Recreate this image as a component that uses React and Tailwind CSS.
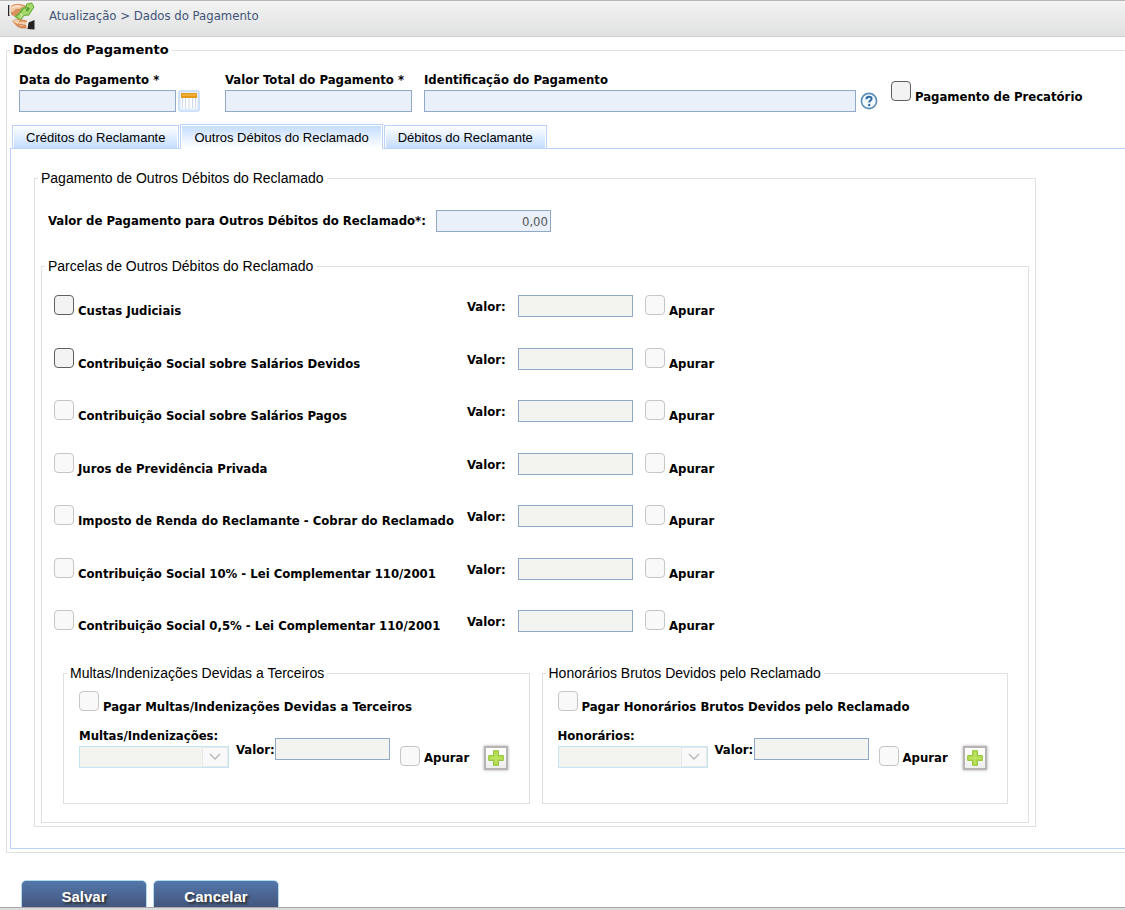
const LABEL = "font-['DejaVu_Sans_Condensed','DejaVu_Sans',sans-serif] text-[13px] leading-4 font-bold text-black";
const FRAME = "min-w-0 border border-[#e0e0e0]";
const LEGEND = "px-[3px] text-[14px] leading-4 text-black font-['Liberation_Sans',sans-serif]";
const FIELD = "h-[22px] border border-[#8fa9c6] px-0.5 text-[13px] text-[#555] font-['DejaVu_Sans_Condensed',sans-serif]";

function Check({ id, text, disabled, compact }) {
  return (
    <label htmlFor={id} className={`flex gap-1 ${compact ? "h-5" : "h-6"}`}>
      <input
        id={id}
        type="checkbox"
        disabled={disabled}
        className="size-5 shrink-0 appearance-none rounded-[4px] border border-[#5f5f5f] bg-[#f3f3f3] checked:bg-[#3b6ea5] disabled:border-[#c6c6c6] disabled:bg-[#f9f9f9]"
      />
      <span className={`self-end whitespace-nowrap ${LABEL}`}>{text}</span>
    </label>
  );
}

function MoneyIcon() {
  return (
    <svg viewBox="0 0 28 28" className="size-7" aria-hidden="true">
      <path d="M0 3h1.500v11H0z" fill="#2a2525" />
      <path d="M1.500 3.500h1.300v9.500H1.500z" fill="#f4f4f4" />
      <path d="M2.800 4c3-2 6-2.500 9-2 4 .6 6 1.600 7 3l-2 3-4 .3-1.500 3.700-4 2c-2 .2-3.500-.8-4.500-2z" fill="#d8905f" />
      <path d="M3 4.500c4-2.500 9-2.300 13 0l-2 2-6 .5-3 3H3z" fill="#f3c7a1" />
      <path d="M4 6c3-1.500 6-1.800 8-1.300" fill="none" stroke="#fdebd9" strokeWidth="1.200" />
      <path d="M18.500 1.500 24 .5l2.500 4.500-5.500 8.500-5 .5-3.500 5-6.500-4.500 5-3.500 3-5.500 3-.3z" fill="#6fae3c" />
      <path d="m19 2.500 4.500-.8 1.800 3.300-5 7.300-4.800.7-3.300 4.300-3.700-2.800 4.300-2.700 3-5 3-.3z" fill="#a5d96c" />
      <path d="m19.500 5 2.500 1-2 3.500-2.500-.5z" fill="#5f9d33" />
      <path d="m12 11.500 2.500 1.500-2 2.500" fill="none" stroke="#dff3c0" strokeWidth="1" />
      <path d="M4 19c1.500-1.500 4-2 6-1.800l4 .3c4 .3 6 1.500 7 2.500v6l-4 .5c-3 .3-6-.5-8-2z" fill="#d68c59" />
      <path d="M4.500 19c3-1.500 6-1.500 7.500-.3l-1.500 1.500 5-.7 5 2v2l-8 .5z" fill="#f6cfac" />
      <path d="m10 22 8 1.500" stroke="#b66c3e" strokeWidth=".8" />
      <path d="m18.500 19.500 2.500-1v8l-2.500-.5z" fill="#f7f7f7" />
      <path d="m20.500 20.500 6-2.500v9.500l-7-.5z" fill="#242222" />
    </svg>
  );
}

function Tab({ text, active }) {
  return (
    <button
      type="button"
      role="tab"
      aria-selected={!!active}
      className={`whitespace-nowrap border border-[#b9d3fb] px-[13px] pt-0.5 text-[13px] leading-4 text-black shadow-[inset_1px_1px_0_#fff,inset_-1px_0_0_#fff] font-['Liberation_Sans',sans-serif] ${
        active
          ? "z-10 -mb-px h-[25px] border-b-white bg-linear-to-b from-[#c3dcff] to-white"
          : "h-[23px] border-b-0 bg-linear-to-b from-white to-[#c3dcff]"
      }`}
    >
      {text}
    </button>
  );
}

const ROWS = [
  { id: "custas", text: "Custas Judiciais", enabled: true },
  { id: "devidos", text: "Contribuição Social sobre Salários Devidos", enabled: true },
  { id: "pagos", text: "Contribuição Social sobre Salários Pagos" },
  { id: "juros", text: "Juros de Previdência Privada" },
  { id: "irpf", text: "Imposto de Renda do Reclamante - Cobrar do Reclamado" },
  { id: "cs10", text: "Contribuição Social 10% - Lei Complementar 110/2001" },
  { id: "cs05", text: "Contribuição Social 0,5% - Lei Complementar 110/2001" },
];

function Parcel({ id, text, enabled }) {
  return (
    <div className="flex items-start">
      <div className="w-[413px] shrink-0">
        <Check id={id} text={text} disabled={!enabled} />
      </div>
      <label htmlFor={`${id}-valor`} className={`mt-1 w-[51px] shrink-0 ${LABEL}`}>Valor:</label>
      <input id={`${id}-valor`} disabled className={`mr-3 w-[115px] bg-[#f3f4f0] ${FIELD}`} />
      <Check id={`${id}-apurar`} text="Apurar" disabled />
    </div>
  );
}

function ThirdParty({ id, legend, check, select }) {
  return (
    <fieldset className={`h-[139px] flex-1 pl-[15px] ${FRAME}`}>
      <legend className={`-ml-3 ${LEGEND}`}>{legend}</legend>
      <div className="mt-2.5">
        <Check id={id} text={check} disabled />
      </div>
      <div className="mt-[13px] flex items-start">
        <div className="flex w-[150px] flex-col">
          <label htmlFor={`${id}-tipo`} className={`mb-0.5 ${LABEL}`}>{select}</label>
          <div className="relative">
            <select id={`${id}-tipo`} disabled className="block h-[22px] w-full appearance-none border border-[#c3e6f2] bg-[#f3f4f0] opacity-100" />
            <span className="pointer-events-none absolute inset-y-px right-px flex w-[26px] items-center justify-center border border-[#e8e8e8] bg-[#f9f9f9]">
              <svg viewBox="0 0 12 8" className="h-2 w-3" fill="none" stroke="#b5b5b5" strokeWidth="1.3" aria-hidden="true">
                <path d="m1 1 5 5 5-5" />
              </svg>
            </span>
          </div>
        </div>
        <label htmlFor={`${id}-valor`} className={`mt-3.5 ml-[7px] w-[39px] ${LABEL}`}>Valor:</label>
        <input id={`${id}-valor`} disabled className={`mt-2.5 mr-2.5 w-[115px] bg-[#f3f4f0] ${FIELD}`} />
        <div className="mt-[18px]">
          <Check id={`${id}-apurar`} text="Apurar" disabled compact />
        </div>
        <button type="button" aria-label="Adicionar" className="mt-[18px] ml-[15px] flex size-6 items-center justify-center border-2 border-[#b9b4b4] bg-linear-to-b from-white to-[#eee] shadow-[0_0_3px_#aaa]">
          <svg viewBox="0 0 16 16" className="size-4" aria-hidden="true">
            <path d="M5.500.7h5v4.800h4.800v5h-4.800v4.800h-5v-4.800H.7v-5h4.800z" fill="#b0da4c" stroke="#94c53e" />
            <path d="M8 2v12M2 8h12" stroke="#c4e670" strokeWidth="1" />
          </svg>
        </button>
      </div>
    </fieldset>
  );
}

function TextField({ id, text, className }) {
  return (
    <div className={`flex flex-col ${className}`}>
      <label htmlFor={id} className={`mb-0.5 whitespace-nowrap ${LABEL}`}>{text}</label>
      <input id={id} className={`w-full bg-[#e9f0f9] ${FIELD}`} />
    </div>
  );
}

function Action({ text }) {
  return (
    <button
      type="button"
      className="h-[33px] w-[126px] rounded-[5px] border border-[#b5dcea] bg-linear-to-b from-[#5377ab] to-[#405075] pt-0.5 text-[15px] font-bold text-white [text-shadow:2px_2px_2px_#333] font-['Liberation_Sans',sans-serif]"
    >
      {text}
    </button>
  );
}

export default function App() {
  return (
    <div className="overflow-hidden bg-white">
      <header className="flex h-[37px] items-start gap-[13px] border-t border-b border-t-[#b8b8b8] border-b-[#cfcfcf] bg-linear-to-b from-[#f3f3f3] to-[#e0e1e1] pt-px pl-2">
        <MoneyIcon />
        <nav className="mt-1.5 text-[13px] leading-4 text-[#3f5478] font-['DejaVu_Sans_Condensed',sans-serif]">
          Atualização &gt; Dados do Pagamento
        </nav>
      </header>

      <main>
        <fieldset className={`mt-[5px] ml-1.5 border-r-0 pb-[3px] pl-[3px] ${FRAME}`}>
          <legend className="px-[3px] text-[13px] leading-4 font-bold text-black font-['DejaVu_Sans',sans-serif]">Dados do Pagamento</legend>

          <div className="mt-3.5 flex items-end pl-[9px]">
            <TextField id="data" text="Data do Pagamento *" className="w-[157px]" />
            <button type="button" aria-label="Calendário" className="mr-[25px] ml-0.5 flex size-[22px] items-center justify-center rounded-[3px] border-2 border-[#cfe0fa] bg-[#e6effc]">
              <svg viewBox="0 0 16 16" className="size-4 shrink-0" aria-hidden="true">
                <path d="M0 5h16v10H0z" fill="#fff" />
                <path d="M1.500 5v10M4.500 5v10M8 5v10M11.500 5v10M14.500 5v10" stroke="#c9d8ec" />
                <path d="M0 0h16v5H0z" fill="#e59a17" />
                <path d="M1 2h14" stroke="#f6c35c" />
              </svg>
            </button>
            <TextField id="total" text="Valor Total do Pagamento *" className="mr-3 w-[187px]" />
            <TextField id="ident" text="Identificação do Pagamento" className="w-[432px]" />
            <button type="button" aria-label="Ajuda" className="mr-[13px] mb-0.5 ml-1">
              <svg viewBox="0 0 18 18" className="size-[18px]" aria-hidden="true">
                <circle cx="9" cy="9" r="7.600" fill="#f4f9fd" stroke="#5b8db9" strokeWidth="1.600" />
                <path d="M6.400 7.200c0-3.400 5.200-3.300 5.200-.4 0 1.800-2.400 1.700-2.400 3.700" fill="none" stroke="#2d6aa3" strokeWidth="2" />
                <circle cx="9.200" cy="13" r="1.200" fill="#2d6aa3" />
              </svg>
            </button>
            <div className="mb-[7px]">
              <Check id="precatorio" text="Pagamento de Precatório" />
            </div>
          </div>

          <div role="tablist" className="mt-3 flex items-end gap-px pl-0.5">
            <Tab text="Créditos do Reclamante" />
            <Tab text="Outros Débitos do Reclamado" active />
            <Tab text="Débitos do Reclamante" />
          </div>

          <section className="border border-r-0 border-[#b9d3fb] pt-[21px] pr-[89px] pb-[21px] pl-[23px]">
            <fieldset className={`pr-1.5 pb-[3px] pl-1.5 ${FRAME}`}>
              <legend className={`-ml-[3px] ${LEGEND}`}>Pagamento de Outros Débitos do Reclamado</legend>
              <div className="mt-6 mb-[26px] flex items-center pl-[7px]">
                <label htmlFor="pagamento" className={`w-[388px] ${LABEL}`}>Valor de Pagamento para Outros Débitos do Reclamado*:</label>
                <input id="pagamento" defaultValue="0,00" className={`w-[115px] bg-[#e9f0f9] text-right ${FIELD}`} />
              </div>

              <fieldset className={`pr-5 pb-[18px] pl-3 ${FRAME}`}>
                <legend className={`-ml-[9px] ${LEGEND}`}>Parcelas de Outros Débitos do Reclamado</legend>
                <div className="mt-[21px] grid min-h-[368px] auto-rows-fr">
                  {ROWS.map((r) => (
                    <Parcel key={r.id} {...r} />
                  ))}
                </div>
                <div className="mt-0.5 ml-[9px] flex gap-3">
                  <ThirdParty id="multas" legend="Multas/Indenizações Devidas a Terceiros" check="Pagar Multas/Indenizações Devidas a Terceiros" select="Multas/Indenizações:" />
                  <ThirdParty id="honorarios" legend="Honorários Brutos Devidos pelo Reclamado" check="Pagar Honorários Brutos Devidos pelo Reclamado" select="Honorários:" />
                </div>
              </fieldset>
            </fieldset>
          </section>
        </fieldset>
      </main>

      <footer className="mt-[27px]">
        <div className="flex h-[27px] items-start gap-1.5 overflow-hidden pl-[21px]">
          <Action text="Salvar" />
          <Action text="Cancelar" />
        </div>
        <div className="h-[3px] border-t border-[#a9a9a9] bg-[#dcdcdc]" />
      </footer>
    </div>
  );
}
